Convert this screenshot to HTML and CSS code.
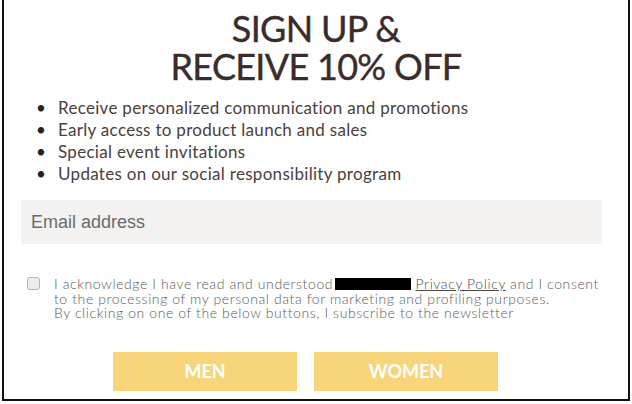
FILE: index.html
```html
<!DOCTYPE html>
<html lang="en">
<head>
  <meta charset="UTF-8" />
  <title>Sign up</title>
  <link rel="stylesheet" href="styles.css">
</head>
<body>
  <div class="modal">
    <h1>SIGN UP &amp;<br>RECEIVE 10% OFF</h1>

    <ul class="perks">
      <li>Receive personalized communication and promotions</li>
      <li>Early access to product launch and sales</li>
      <li>Special event invitations</li>
      <li>Updates on our social responsibility program</li>
    </ul>

    <input type="email" class="email" placeholder="Email address">

    <label class="consent">
      <input type="checkbox" class="check">
      <span>I acknowledge I have read and understood<span class="redacted"></span> <a href="#">Privacy Policy</a> and I consent to the processing of my personal data for marketing and profiling purposes.<br>By clicking on one of the below buttons, I subscribe to the newsletter</span>
    </label>

    <div class="actions">
      <button>MEN</button>
      <button>WOMEN</button>
    </div>
  </div>
</body>
</html>
```

FILE: styles.css
```css
body {
  margin: 0;
  background: #fff;
  font-family: 'Lato', 'Noto Sans', sans-serif;
}
.modal {
  box-sizing: border-box;
  width: 628px;
  height: 401px;
  margin-left: 2px;
  border: 2px solid #111;
  border-top: none;
  display: flex;
  flex-direction: column;
}
h1 {
  margin: 9px 0 0;
  text-align: center;
  font-size: 36px;
  line-height: 38px;
  font-weight: 400;
  color: #3a2c2c;
  letter-spacing: -0.7px;
  -webkit-text-stroke: 0.4px #3a2c2c;
}
.perks {
  list-style: none;
  margin: 12px 0 0;
  padding-left: 32px;
  font-size: 17px;
  line-height: 22px;
  letter-spacing: 0.3px;
  color: #4a4040;
}
.perks li {
  display: flex;
}
.perks li::before {
  content: "\2022";
  flex: none;
  width: 22px;
  color: #222;
}
.email {
  margin: 15px 0 0 17px;
  width: 581px;
  height: 44px;
  box-sizing: border-box;
  border: none;
  background: #f3f2f0;
  padding: 0 10px;
  font-family: 'Liberation Sans', Arial, sans-serif;
  font-size: 18px;
  color: #666;
}
.email::placeholder {
  color: #6b6b6b;
}
.consent {
  display: flex;
  gap: 14px;
  margin: 33px 22px 0 23px;
  font-size: 14px;
  font-weight: 300;
  letter-spacing: 0.6px;
  line-height: 14.5px;
  color: #5a5a5a;
}
.check {
  appearance: none;
  flex: none;
  width: 13px;
  height: 13px;
  margin: 0;
  border: 1px solid #b5b5b5;
  border-radius: 3px;
  background: #ececec;
}
.redacted {
  display: inline-block;
  width: 76px;
  height: 12px;
  margin-left: 2px;
  background: #000;
  vertical-align: -1px;
}
.consent a {
  color: #4a4a4a;
  text-decoration: underline;
}
.actions {
  display: flex;
  gap: 17px;
  margin: 31px 0 0 109px;
}
.actions button {
  width: 184px;
  height: 39px;
  border: none;
  background: #f8d47b;
  color: #fff;
  font-family: 'Lato', sans-serif;
  font-size: 18px;
  font-weight: 700;
}
```
